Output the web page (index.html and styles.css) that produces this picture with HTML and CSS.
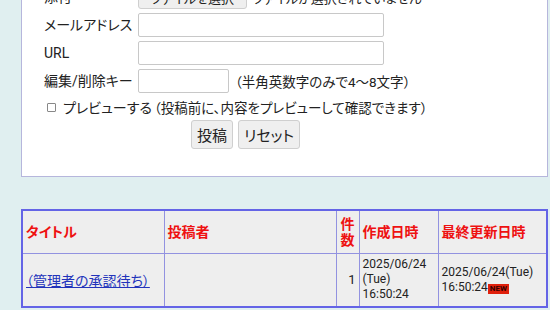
FILE: index.html
```html
<!DOCTYPE html>
<html lang="ja">
<head>
    <meta charset="UTF-8">
    <title>掲示板</title>
    <link rel="stylesheet" href="styles.css">
</head>
<body>
    <div class="page">
        <form class="post-box">
            <div class="post-form">
                <label class="label">添付</label>
                <div class="field">
                    <button type="button" class="btn btn-file">ファイルを選択</button>
                    <span class="file-name">ファイルが選択されていません</span>
                </div>

                <label class="label" for="email">メールアドレス</label>
                <div class="field"><input type="text" id="email" class="input input-wide"></div>

                <label class="label" for="url">URL</label>
                <div class="field"><input type="text" id="url" class="input input-wide"></div>

                <label class="label" for="key">編集/削除キー</label>
                <div class="field">
                    <input type="password" id="key" class="input input-key">
                    <span class="note">（半角英数字のみで4～8文字）</span>
                </div>

                <label class="preview">
                    <input type="checkbox" class="check">
                    <span>プレビューする</span>
                    <span class="preview-note">（投稿前に、内容をプレビューして確認できます）</span>
                </label>

                <div class="actions">
                    <button type="submit" class="btn">投稿</button>
                    <button type="reset" class="btn">リセット</button>
                </div>
            </div>
        </form>

        <table class="threads">
            <colgroup>
                <col class="c-title">
                <col class="c-author">
                <col class="c-count">
                <col class="c-created">
                <col class="c-updated">
            </colgroup>
            <tr class="head">
                <th>タイトル</th>
                <th>投稿者</th>
                <th class="count">件数</th>
                <th>作成日時</th>
                <th>最終更新日時</th>
            </tr>
            <tr class="row">
                <td><a href="#">（管理者の承認待ち）</a></td>
                <td></td>
                <td class="num">1</td>
                <td class="date">2025/06/24 (Tue) 16:50:24</td>
                <td class="date">2025/06/24(Tue)<br>16:50:24<span class="new">NEW</span></td>
            </tr>
        </table>
    </div>
</body>
</html>
```

FILE: styles.css
```css
body {
    margin: 0;
    background: #e0eff0;
    font-family: Roboto, "Noto Sans CJK JP", sans-serif;
    font-feature-settings: "palt";
    font-size: 14px;
    color: #222;
}
.page {
    padding: 0 2px 0 21px;
}
.post-box {
    margin: -26px 0 0;
    padding: 10px 0 27px 22px;
    background: #fff;
    border: 1px solid #b6b6dc;
}
.post-form {
    width: 403px;
    display: grid;
    grid-template-columns: 94px 1fr;
    row-gap: 4px;
}
.label {
    height: 24px;
    line-height: 24px;
    white-space: nowrap;
}
.field {
    display: flex;
    align-items: center;
    gap: 6px;
    height: 24px;
    white-space: nowrap;
}
.input {
    box-sizing: border-box;
    height: 24px;
    margin: 0;
    border: 1px solid #c8c8c8;
    border-radius: 2px;
    background: #fff;
}
.input-wide {
    width: 246px;
}
.input-key {
    width: 91px;
}
.note {
    font-size: 13.5px;
}
.btn {
    font-family: inherit;
    font-feature-settings: "palt";
    font-size: 15px;
    color: #222;
    background: #efefef;
    border: 1px solid #cfcfcf;
    border-radius: 3px;
    padding: 0 5px;
    height: 29px;
}
.btn-file {
    height: 24px;
    font-size: 13px;
    width: 109px;
}
.file-name {
    font-size: 13px;
}
.preview {
    grid-column: 1 / 3;
    display: flex;
    align-items: center;
    height: 20px;
    white-space: nowrap;
    font-size: 14px;
}
.preview-note {
    font-size: 13.5px;
    margin-left: 2px;
}
.check {
    appearance: none;
    width: 9px;
    height: 9px;
    margin: 0 7px 0 3px;
    border: 1px solid #888;
    border-radius: 1px;
    background: #fff;
}
.actions {
    grid-column: 1 / 3;
    display: flex;
    justify-content: center;
    gap: 5px;
    margin-top: -1px;
}
.threads {
    width: 100%;
    margin-top: 32px;
    border-collapse: collapse;
    border: 2px solid #6464e6;
    background: #eee;
}
.threads th,
.threads td {
    border: 1px solid #9292e0;
    padding: 2px 3px;
    vertical-align: middle;
}
.c-title { width: 142px; }
.c-author { width: 172px; }
.c-count { width: 23px; }
.c-created { width: 79px; }
.threads th {
    color: #ee1111;
    font-weight: bold;
    text-align: left;
    line-height: 16px;
}
.threads th.count {
    padding: 2px 1px;
    text-align: center;
}
.head {
    height: 43px;
}
.row {
    height: 54px;
}
.threads a {
    color: #2233bb;
}
.num {
    text-align: right;
    font-size: 13px;
}
.date {
    font-size: 12px;
    line-height: 15px;
}
.new {
    display: inline-block;
    background: #e0200c;
    color: #300;
    font-size: 8px;
    font-weight: bold;
    line-height: 10px;
    padding: 0 2px;
    vertical-align: 0;
}
```
